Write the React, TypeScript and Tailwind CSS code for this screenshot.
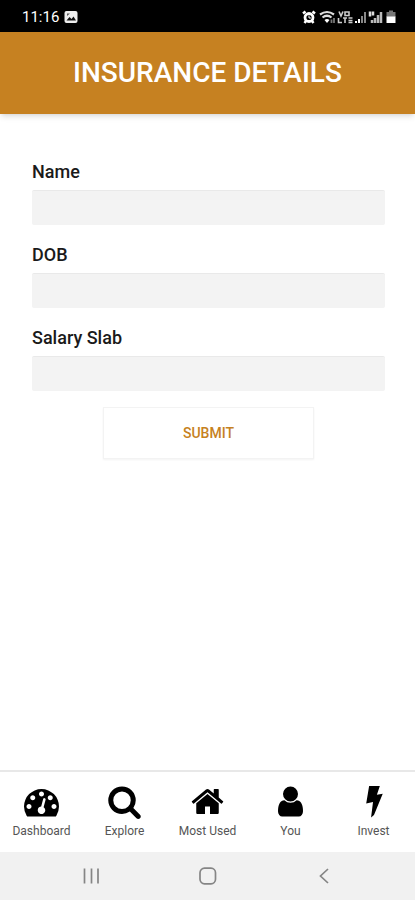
import type { ReactNode } from "react";

const fields = [
  { id: "name", label: "Name" },
  { id: "dob", label: "DOB" },
  { id: "salarySlab", label: "Salary Slab" },
];

const TabIcon = ({ path }: { path: string }) => (
  <svg viewBox="0 0 1792 1792" fill="currentColor" className="size-[35px]">
    <path d={path} />
  </svg>
);

const tabs: { label: string; icon: ReactNode }[] = [
  {
    label: "Dashboard",
    icon: (
      <TabIcon path="M384 1152q0-53-37.5-90.5t-90.5-37.5-90.5 37.5-37.5 90.5 37.5 90.5 90.5 37.5 90.5-37.5 37.5-90.5zm192-448q0-53-37.5-90.5t-90.5-37.5-90.5 37.5-37.5 90.5 37.5 90.5 90.5 37.5 90.5-37.5 37.5-90.5zm428 481l101-382q6-26-7.5-48.5t-38.5-29.5-48 6.5-30 39.5l-101 382q-60 5-107 43.5t-63 98.5q-20 77 20 146t117 89 146-20 89-117q16-60-6-117t-72-91zm660-33q0-53-37.5-90.5t-90.5-37.5-90.5 37.5-37.5 90.5 37.5 90.5 90.5 37.5 90.5-37.5 37.5-90.5zm-640-640q0-53-37.5-90.5t-90.5-37.5-90.5 37.5-37.5 90.5 37.5 90.5 90.5 37.5 90.5-37.5 37.5-90.5zm448 192q0-53-37.5-90.5t-90.5-37.5-90.5 37.5-37.5 90.5 37.5 90.5 90.5 37.5 90.5-37.5 37.5-90.5zm320 448q0 261-141 483-19 29-54 29h-1402q-35 0-54-29-141-221-141-483 0-182 71-348t191-286 286-191 348-71 348 71 286 191 191 286 71 348z" />
    ),
  },
  {
    label: "Explore",
    icon: (
      <TabIcon path="M1216 832q0-185-131.5-316.5t-316.5-131.5-316.5 131.5-131.5 316.5 131.5 316.5 316.5 131.5 316.5-131.5 131.5-316.5zm512 832q0 52-38 90t-90 38q-54 0-90-38l-343-342q-179 124-399 124-143 0-273.5-55.5t-225-150-150-225-55.5-273.5 55.5-273.5 150-225 225-150 273.5-55.5 273.5 55.5 225 150 150 225 55.5 273.5q0 220-124 399l343 343q37 37 37 90z" />
    ),
  },
  {
    label: "Most Used",
    icon: (
      <TabIcon path="M1472 992v480q0 26-19 45t-45 19h-384v-384h-256v384h-384q-26 0-45-19t-19-45v-480q0-1 .5-3t.5-3l575-474 575 474q1 2 1 6zm223-69l-62 74q-8 9-21 11h-3q-13 0-21-7l-692-577-692 577q-12 8-24 7-13-2-21-11l-62-74q-8-10-7-23.5t11-21.5l719-599q32-26 76-26t76 26l244 204v-195q0-14 9-23t23-9h192q14 0 23 9t9 23v408l219 182q10 8 11 21.5t-7 23.5z" />
    ),
  },
  {
    label: "You",
    icon: (
      <TabIcon path="M1536 1399q0 109-62.5 187t-150.5 78h-854q-88 0-150.5-78t-62.5-187q0-85 8.5-160.5t31.5-152 58.5-131 94-89 134.5-34.5q131 128 313 128t313-128q76 0 134.5 34.5t94 89 58.5 131 31.5 152 8.5 160.5zm-256-887q0 159-112.5 271.5t-271.5 112.5-271.5-112.5-112.5-271.5 112.5-271.5 271.5-112.5 271.5 112.5 112.5 271.5z" />
    ),
  },
  {
    label: "Invest",
    icon: (
      <svg viewBox="0 0 36 36" fill="currentColor" className="size-[35px]">
        <path d="M13.500 2H24.500L21.500 11L27.500 10L18.500 32L15.500 34.500L17.500 18.500L10.500 20Z" />
      </svg>
    ),
  },
];

const StatusBar = () => (
  <div className="flex h-8 items-center justify-between bg-black pt-[2px] pr-[18px] pl-[22px] text-white">
    <div className="flex items-center gap-[5px]">
      <span className="text-[15px] leading-5">11:16</span>
      <svg viewBox="0 0 14 14" className="size-[14px]">
        <rect x="0.5" y="1" width="13" height="12" rx="2" fill="#eee" />
        <path d="M2.5 10.5 5.5 7l2 2 2-2.500 2.500 4z" fill="#111" />
        <path d="M3 3.500h3L3 6z" fill="#555" />
      </svg>
    </div>
    <svg viewBox="0 0 96 16" className="h-4 w-24" fill="none">
      {/* alarm */}
      <circle cx="8" cy="8.500" r="4" stroke="#fff" strokeWidth="2.800" />
      <path d="M2 4.500 4.500 2.500M14 4.500l-2.500-2M3.500 14l1.500-2M12.500 14 11 12" stroke="#fff" strokeWidth="2.500" />
      <path d="M8 6.500v2.500h2" stroke="#fff" />
      {/* wifi */}
      <path d="M19 5.500q7-5 14 0M21.500 8.500q4.500-3.500 9 0" stroke="#ddd" strokeWidth="2.200" />
      <path d="M23.500 11q2.500-2 5 0L26 14z" fill="#fff" />
      <path d="M30.500 14v-3.500M33 9v5" stroke="#777" strokeWidth="1.800" />
      {/* volte */}
      <path d="M38 2.500 40 7l2-4.500M44 3h4v3.500h-4zM37.500 9v4.500H41M42 9h4M44 9v5M47.500 9h4M47.500 11.500h4M47.500 13.500h4" stroke="#ccc" strokeWidth="1.600" />
      {/* signals */}
      <path d="M55 14v-2M58 14v-4" stroke="#fff" strokeWidth="2" />
      <path d="M61 14V7M64 14V3" stroke="#888" strokeWidth="2" />
      <path d="M69 2.500v5M72 2.500v4" stroke="#ddd" strokeWidth="2.500" />
      <path d="M71 14v-3M74 14V9M77 14V6M80 14V3" stroke="#bbb" strokeWidth="2.500" />
      {/* battery */}
      <path d="M88 1.500h4V3h2.500v5h-9V3H88z" fill="#777" />
      <path d="M85.500 7.500h9V14h-9z" fill="#fff" />
    </svg>
  </div>
);

const SystemNav = () => (
  <div className="grid h-12 grid-cols-3 items-center bg-[#f1f1f1] px-8 text-[#858585]">
    <button type="button" aria-label="Recent apps" className="flex justify-center">
      <svg viewBox="0 0 18 18" className="size-[18px]" stroke="currentColor" strokeWidth="1.700">
        <path d="M2.500 1.500v15M9.500 1.500v15M16 1.500v15" />
      </svg>
    </button>
    <button type="button" aria-label="Home" className="flex justify-center">
      <svg viewBox="0 0 18 18" className="size-[18px]" fill="none" stroke="currentColor" strokeWidth="1.700">
        <rect x="1" y="1.200" width="15.500" height="15.600" rx="4.500" />
      </svg>
    </button>
    <button type="button" aria-label="Back" className="flex justify-center">
      <svg viewBox="0 0 18 18" className="size-[18px]" fill="none" stroke="currentColor" strokeWidth="1.700">
        <path d="M12 2 4.500 9l7.500 7" />
      </svg>
    </button>
  </div>
);

const App = () => {
  return (
    <div className="flex min-h-screen flex-col bg-white font-['Roboto',sans-serif]">
      <StatusBar />
      <header className="bg-[#c68121] py-[23px] text-center shadow-md">
        <h1 className="text-[28px] leading-9 font-medium text-white">
          INSURANCE DETAILS
        </h1>
      </header>
      <main className="flex-1 pt-[46px] pr-[30px] pl-8">
        <form onSubmit={(e) => e.preventDefault()}>
          <div className="flex flex-col gap-[18px]">
            {fields.map((field) => (
              <div key={field.id}>
                <label
                  htmlFor={field.id}
                  className="block pb-[6px] text-lg leading-6 font-medium text-[#1a1a1a]"
                >
                  {field.label}
                </label>
                <input
                  id={field.id}
                  name={field.id}
                  type="text"
                  className="block h-[35px] w-full rounded-[2px] border-t border-[#e9e9e9] bg-[#f3f3f3] px-3 outline-none"
                />
              </div>
            ))}
          </div>
          <button
            type="submit"
            className="mx-auto mt-4 block h-[52px] w-3/5 border border-[#f3f3f3] bg-white text-sm font-medium text-[#c68121] shadow-xs"
          >
            SUBMIT
          </button>
        </form>
      </main>
      <nav className="grid h-[82px] grid-cols-5 border-t-2 border-[#e8e8e8] pt-3">
        {tabs.map((tab) => (
          <a key={tab.label} href="#" className="flex flex-col items-center gap-1 text-black">
            {tab.icon}
            <span className="text-xs leading-4 text-[#555]">{tab.label}</span>
          </a>
        ))}
      </nav>
      <SystemNav />
    </div>
  );
};

export default App;
